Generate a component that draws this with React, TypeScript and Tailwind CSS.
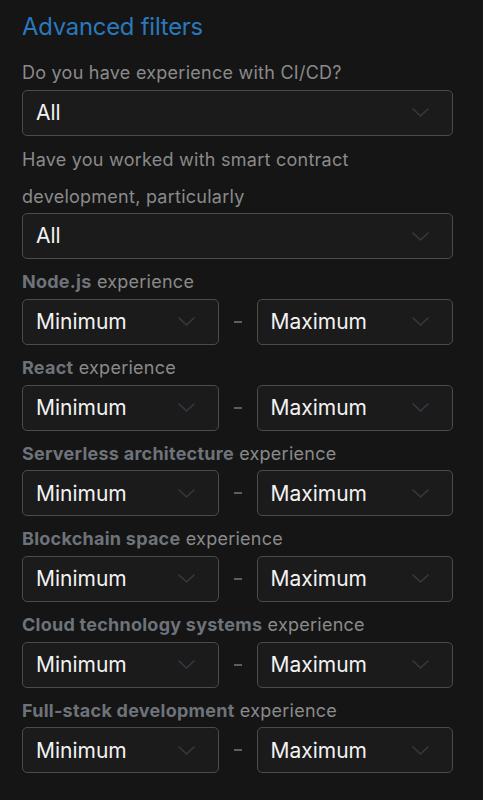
import React from 'react';

const Chevron = () => (
  <svg width="17" height="9" viewBox="0 0 17 9" fill="none" className="shrink-0">
    <path d="M1 1l7.5 7L16 1" stroke="#383842" strokeWidth="1.6" strokeLinecap="round" strokeLinejoin="round" />
  </svg>
);

const SelectBox: React.FC<{ value: string; className?: string }> = ({ value, className = '' }) => (
  <div
    className={`h-[46px] rounded-[5px] border border-[#4b4b4b] bg-[#1b1b1c] pl-[13px] pr-[23px] flex items-center justify-between ${className}`}
  >
    <span className="text-[21px] text-[#f2f2f2]">{value}</span>
    <Chevron />
  </div>
);

const ranges = [
  'Node.js',
  'React',
  'Serverless architecture',
  'Blockchain space',
  'Cloud technology systems',
  'Full-stack development',
];

export default function App() {
  return (
    <div
      className="min-h-[800px] w-full bg-[#151515] pl-[22px] pr-[30px] pt-[12px]"
      style={{ fontFamily: 'Inter, "Noto Sans", sans-serif' }}
    >
      <h1 className="text-[23.8px] leading-[30px] text-[#2a79bd] mb-[12px] tracking-[-0.2px]">Advanced filters</h1>

      <div className="flex flex-col gap-[4.2px]">
        <div className="flex flex-col">
          <p className="text-[18px] leading-[37px] tracking-[0.25px] text-[#8a8a8a]">Do you have experience with CI/CD?</p>
          <SelectBox value="All" className="-mt-[1.5px]" />
        </div>
        <div className="flex flex-col mt-[1px]">
          <p className="text-[18px] leading-[37px] tracking-[0.25px] text-[#8a8a8a] max-w-[360px]">
            Have you worked with smart contract development, particularly
          </p>
          <SelectBox value="All" className="-mt-[1.5px]" />
        </div>

        {ranges.map((r) => (
          <div key={r} className="flex flex-col">
            <p className="text-[18px] leading-[37px] tracking-[0.25px] text-[#8a8a8a]">
              <span className="font-bold text-[#6d7379]">{r}</span> experience
            </p>
            <div className="-mt-[1.5px] grid grid-cols-[1fr_38px_1fr]">
              <SelectBox value="Minimum" />
              <div className="flex items-center justify-center">
                <div className="w-[8px] h-[2px] bg-[#5e5e5e]" />
              </div>
              <SelectBox value="Maximum" />
            </div>
          </div>
        ))}
      </div>
    </div>
  );
}
